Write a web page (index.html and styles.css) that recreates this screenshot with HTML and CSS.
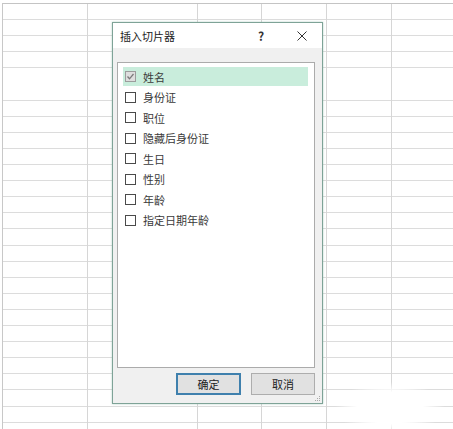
FILE: index.html
```html
<!DOCTYPE html>

<html>

<head>

<meta http-equiv="Content-Type" content="text/html; charset=utf-8" />
<title>插入切片器</title>

<link rel="stylesheet" href="styles.css">

</head>

<body>

<div class="Sheet" >
    <div class="Col ColA" ></div>
    <div class="Col ColB" ></div>
    <div class="Col ColC" ></div>
    <div class="Col ColD" ></div>
    <div class="Col ColE" ></div>
    <div class="Col ColF" ></div>
</div>

<div class="Dialog" >
    <div class="TitleBar" >
        <span class="Title" >插入切片器</span>
        <span class="Help" >?</span>
        <svg class="Close" width="10" height="10" viewBox="0 0 10 10" >
            <path d="M0.5 0.5 L9.5 9.5 M9.5 0.5 L0.5 9.5" />
        </svg>
    </div>
    <div class="DialogBody" >
        <div class="FieldList" >
            <div class="Field Selected" >
                <span class="Check Checked" >
                    <svg width="9" height="9" viewBox="0 0 9 9" ><polyline points="1.5,4.5 3.5,6.8 7.5,2" /></svg>
                </span>姓名
            </div>
            <div class="Field" ><span class="Check" ></span>身份证</div>
            <div class="Field" ><span class="Check" ></span>职位</div>
            <div class="Field" ><span class="Check" ></span>隐藏后身份证</div>
            <div class="Field" ><span class="Check" ></span>生日</div>
            <div class="Field" ><span class="Check" ></span>性别</div>
            <div class="Field" ><span class="Check" ></span>年龄</div>
            <div class="Field" ><span class="Check" ></span>指定日期年龄</div>
        </div>
        <div class="Buttons" >
            <button class="Button Default" type="button" >确定</button>
            <button class="Button Cancel" type="button" >取消</button>
        </div>
    </div>
    <svg class="Grip" width="7" height="7" viewBox="0 0 7 7" >
        <rect x="5" y="1" width="1" height="1" />
        <rect x="3" y="3" width="1" height="1" />
        <rect x="5" y="3" width="1" height="1" />
        <rect x="1" y="5" width="1" height="1" />
        <rect x="3" y="5" width="1" height="1" />
        <rect x="5" y="5" width="1" height="1" />
    </svg>
</div>

<div class="Smudge" ></div>

</body>
</html>
```

FILE: styles.css
```css
	html, body {
		margin: 0;
		height: 100%;
		overflow: hidden;
		background: #fff;
		font-family: "Noto Sans CJK SC", "Liberation Sans", sans-serif;
	}
	.Sheet {
		display: flex;
		margin: 3px 0 0 2px;
		height: 426px;
		border-top: 1px solid #c4c4c4;
		border-left: 1px solid #c8c8c8;
		background: repeating-linear-gradient(to bottom, transparent 0, transparent 15.1px, #dcdcdc 15.1px, #dcdcdc 16.1px);
	}
	.Col {
		flex: none;
		border-right: 1px solid #d6d6d6;
	}
	.ColA { width: 84px; }
	.ColB { width: 109px; }
	.ColC { width: 63px; }
	.ColD { width: 64px; }
	.ColE { width: 64px; }
	.ColF {
		flex: 1;
		border-right: none;
	}
	.Dialog {
		position: absolute;
		left: 112px;
		top: 22px;
		width: 211px;
		height: 382px;
		box-sizing: border-box;
		border: 1px solid #7ea397;
		box-shadow: 0 0 2px rgba(90, 150, 130, 0.45);
		background: #f0f0f0;
		display: flex;
		flex-direction: column;
	}
	.TitleBar {
		height: 25px;
		flex: none;
		display: flex;
		align-items: center;
		padding: 0 15px 0 7px;
		background: #fff;
		font-size: 11px;
		color: #222;
	}
	.Title {
		flex: 1;
	}
	.Help {
		width: 12px;
		text-align: center;
		font-size: 12px;
		font-weight: bold;
		color: #333;
	}
	.Close {
		margin-left: 30px;
		stroke: #333;
		stroke-width: 1;
		fill: none;
	}
	.DialogBody {
		flex: 1;
		display: flex;
		flex-direction: column;
		padding: 14px 7px 8px 4px;
	}
	.FieldList {
		height: 306px;
		box-sizing: border-box;
		border: 1px solid #ababab;
		background: #fff;
		padding: 4px 6px 0 5px;
	}
	.Field {
		height: 19px;
		margin-bottom: 1.57px;
		display: flex;
		align-items: center;
		padding-left: 2px;
		font-size: 11px;
		color: #3a3a3a;
	}
	.Selected {
		background: #c9eddc;
	}
	.Check {
		width: 11px;
		height: 11px;
		box-sizing: border-box;
		border: 1px solid #4a4a4a;
		background: #fff;
		margin-right: 7px;
		display: flex;
		align-items: center;
		justify-content: center;
	}
	.Checked {
		border-color: #9c9c9c;
		background: #dedede;
	}
	.Checked svg {
		fill: none;
		stroke: #7a7a7a;
		stroke-width: 1.3;
	}
	.Buttons {
		display: flex;
		justify-content: flex-end;
		gap: 10px;
		margin-top: 5px;
	}
	.Button {
		height: 22px;
		box-sizing: border-box;
		margin: 0;
		padding: 0;
		background: #e1e1e1;
		border: 1px solid #adadad;
		font-family: "Noto Sans CJK SC", sans-serif;
		font-size: 11px;
		color: #222;
	}
	.Default {
		width: 65px;
		border: 2px solid #3f80ad;
	}
	.Cancel {
		width: 64px;
	}
	.Grip {
		position: absolute;
		right: 1px;
		bottom: 1px;
		fill: #a8a8a8;
	}
	.Smudge {
		position: absolute;
		left: 335px;
		top: 382px;
		width: 110px;
		height: 52px;
		background: radial-gradient(closest-side, #fff 60%, rgba(255, 255, 255, 0));
	}
```
